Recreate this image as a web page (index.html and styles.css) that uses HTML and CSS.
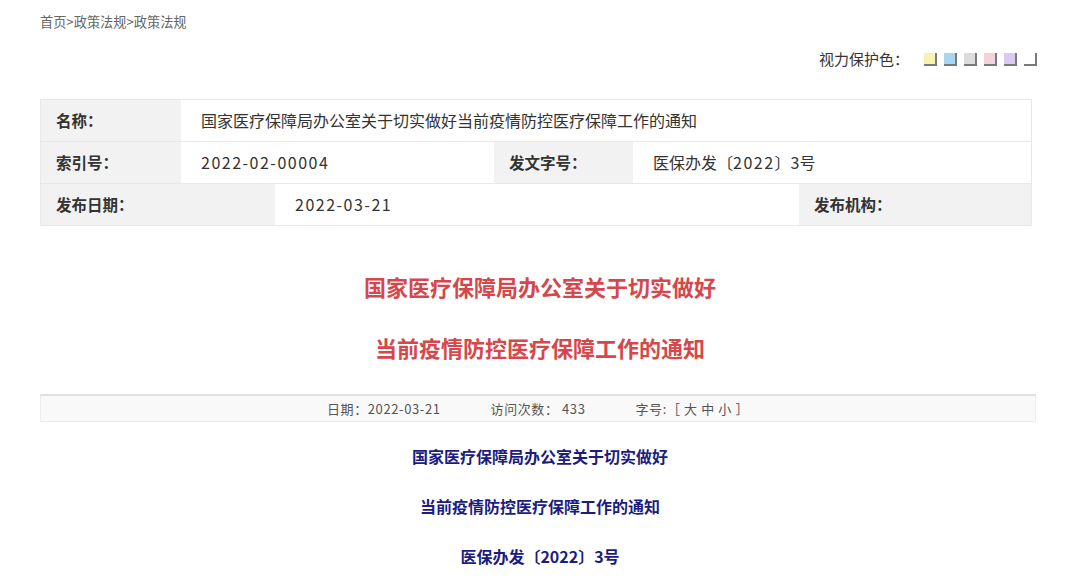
FILE: index.html
```html
<!DOCTYPE html>
<html lang="zh-CN">
<head>
    <meta charset="UTF-8">
    <meta name="viewport" content="width=device-width, initial-scale=1.0">
    <title>政策法规</title>
    <link rel="stylesheet" href="styles.css">
</head>
<body>

<div class="crumb">首页&gt;政策法规&gt;政策法规</div>

<div class="eyecare">
    <span>视力保护色：</span>
    <span class="swatch yellow"></span>
    <span class="swatch blue"></span>
    <span class="swatch grey"></span>
    <span class="swatch pink"></span>
    <span class="swatch purple"></span>
    <span class="swatch white"></span>
</div>

<div class="meta">
    <div class="row">
        <div class="label w140">名称：</div>
        <div class="value grow">国家医疗保障局办公室关于切实做好当前疫情防控医疗保障工作的通知</div>
    </div>
    <div class="row">
        <div class="label w140">索引号：</div>
        <div class="value w313"><span class="num">2022-02-00004</span></div>
        <div class="label w139 pad15">发文字号：</div>
        <div class="value grow">医保办发〔<span class="num">2022</span>〕3号</div>
    </div>
    <div class="row">
        <div class="label w234">发布日期：</div>
        <div class="value w524"><span class="num">2022-03-21</span></div>
        <div class="label grow pad15">发布机构：</div>
    </div>
</div>

<h1 class="title">国家医疗保障局办公室关于切实做好<br>当前疫情防控医疗保障工作的通知</h1>

<div class="infobar">
    <span>日期：2022-03-21</span>
    <span>访问次数： 433</span>
    <span>字号:［ 大 中 小 ］</span>
</div>

<div class="article">
    <p>国家医疗保障局办公室关于切实做好</p>
    <p>当前疫情防控医疗保障工作的通知</p>
    <p>医保办发〔2022〕3号</p>
</div>

</body>
</html>
```

FILE: styles.css
```css
body {
    margin: 0;
    padding: 0;
    background-color: #fff;
    font-family: "Noto Sans CJK SC", "Noto Sans", sans-serif;
    color: #333;
}

.crumb {
    padding: 14px 0 0 40px;
    font-size: 13.2px;
    line-height: 16px;
    color: #666;
}

.eyecare {
    margin-top: 19px;
    padding-right: 43px;
    display: flex;
    justify-content: flex-end;
    align-items: center;
    gap: 7px;
    font-size: 15px;
    line-height: 20px;
    color: #333;
}

.eyecare span:first-child {
    margin-right: 8px;
}

.swatch {
    width: 11px;
    height: 11px;
    border-right: 2px solid #7a7a7a;
    border-bottom: 2px solid #7a7a7a;
}

.yellow { background-color: #f7f2b2; }
.blue { background-color: #a8d6ef; }
.grey { background-color: #dcdcdc; }
.pink { background-color: #f2d3da; }
.purple { background-color: #dbcaef; }
.white { background-color: #fff; }

.meta {
    margin: 30px 48px 0 40px;
    border: 1px solid #e8e8e8;
}

.row {
    display: flex;
    height: 41px;
    border-top: 1px solid #e8e8e8;
}

.row:first-child {
    border-top: none;
}

.label,
.value {
    box-sizing: border-box;
    display: flex;
    align-items: center;
    padding-bottom: 2px;
}

.label {
    background-color: #f2f2f2;
    padding-left: 15px;
    font-size: 15.5px;
    font-weight: bold;
    color: #333;
}

.value {
    background-color: #fff;
    padding-left: 20px;
    font-size: 16px;
    color: #333;
}

.num {
    letter-spacing: 1.5px;
}

.w140 { width: 140px; }
.w139 { width: 139px; }
.w234 { width: 234px; }
.w313 { width: 313px; }
.w524 { width: 524px; }
.grow { flex: 1; }

.title {
    margin: 30px 0 0 0;
    text-align: center;
    font-size: 22px;
    line-height: 61px;
    font-weight: bold;
    color: #d6474b;
}

.infobar {
    margin: 16px 44px 0 40px;
    height: 25px;
    border: 1px solid #ececec;
    border-top: 2px solid #e0e0e0;
    background-color: #f9f9f9;
    display: flex;
    justify-content: center;
    align-items: center;
    gap: 50px;
    font-size: 13px;
    letter-spacing: 0.6px;
    color: #555;
}

.article {
    margin-top: 9px;
    text-align: center;
    color: #1c1c80;
    font-weight: bold;
    font-size: 16px;
}

.article p {
    margin: 0;
    line-height: 50px;
}
```
